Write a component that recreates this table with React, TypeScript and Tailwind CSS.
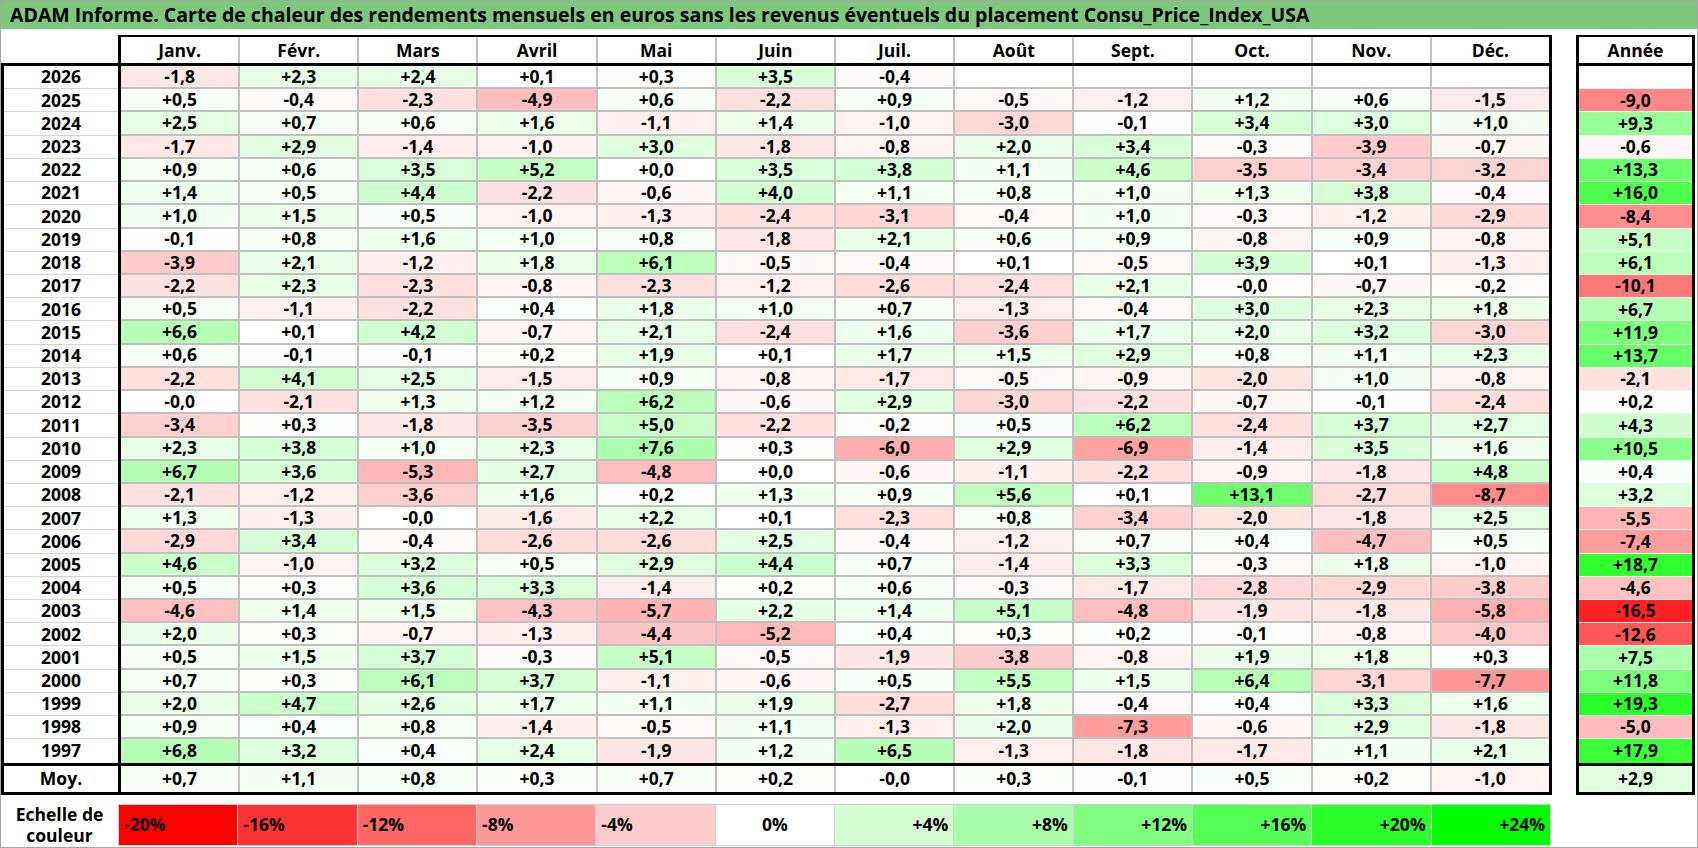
import React from 'react';

const months = ['Janv.', 'Févr.', 'Mars', 'Avril', 'Mai', 'Juin', 'Juil.', 'Août', 'Sept.', 'Oct.', 'Nov.', 'Déc.'];

const raw: string[] = [
  '2026 -1,8 +2,3 +2,4 +0,1 +0,3 +3,5 -0,4 _ _ _ _ _ _',
  '2025 +0,5 -0,4 -2,3 -4,9 +0,6 -2,2 +0,9 -0,5 -1,2 +1,2 +0,6 -1,5 -9,0',
  '2024 +2,5 +0,7 +0,6 +1,6 -1,1 +1,4 -1,0 -3,0 -0,1 +3,4 +3,0 +1,0 +9,3',
  '2023 -1,7 +2,9 -1,4 -1,0 +3,0 -1,8 -0,8 +2,0 +3,4 -0,3 -3,9 -0,7 -0,6',
  '2022 +0,9 +0,6 +3,5 +5,2 +0,0 +3,5 +3,8 +1,1 +4,6 -3,5 -3,4 -3,2 +13,3',
  '2021 +1,4 +0,5 +4,4 -2,2 -0,6 +4,0 +1,1 +0,8 +1,0 +1,3 +3,8 -0,4 +16,0',
  '2020 +1,0 +1,5 +0,5 -1,0 -1,3 -2,4 -3,1 -0,4 +1,0 -0,3 -1,2 -2,9 -8,4',
  '2019 -0,1 +0,8 +1,6 +1,0 +0,8 -1,8 +2,1 +0,6 +0,9 -0,8 +0,9 -0,8 +5,1',
  '2018 -3,9 +2,1 -1,2 +1,8 +6,1 -0,5 -0,4 +0,1 -0,5 +3,9 +0,1 -1,3 +6,1',
  '2017 -2,2 +2,3 -2,3 -0,8 -2,3 -1,2 -2,6 -2,4 +2,1 -0,0 -0,7 -0,2 -10,1',
  '2016 +0,5 -1,1 -2,2 +0,4 +1,8 +1,0 +0,7 -1,3 -0,4 +3,0 +2,3 +1,8 +6,7',
  '2015 +6,6 +0,1 +4,2 -0,7 +2,1 -2,4 +1,6 -3,6 +1,7 +2,0 +3,2 -3,0 +11,9',
  '2014 +0,6 -0,1 -0,1 +0,2 +1,9 +0,1 +1,7 +1,5 +2,9 +0,8 +1,1 +2,3 +13,7',
  '2013 -2,2 +4,1 +2,5 -1,5 +0,9 -0,8 -1,7 -0,5 -0,9 -2,0 +1,0 -0,8 -2,1',
  '2012 -0,0 -2,1 +1,3 +1,2 +6,2 -0,6 +2,9 -3,0 -2,2 -0,7 -0,1 -2,4 +0,2',
  '2011 -3,4 +0,3 -1,8 -3,5 +5,0 -2,2 -0,2 +0,5 +6,2 -2,4 +3,7 +2,7 +4,3',
  '2010 +2,3 +3,8 +1,0 +2,3 +7,6 +0,3 -6,0 +2,9 -6,9 -1,4 +3,5 +1,6 +10,5',
  '2009 +6,7 +3,6 -5,3 +2,7 -4,8 +0,0 -0,6 -1,1 -2,2 -0,9 -1,8 +4,8 +0,4',
  '2008 -2,1 -1,2 -3,6 +1,6 +0,2 +1,3 +0,9 +5,6 +0,1 +13,1 -2,7 -8,7 +3,2',
  '2007 +1,3 -1,3 -0,0 -1,6 +2,2 +0,1 -2,3 +0,8 -3,4 -2,0 -1,8 +2,5 -5,5',
  '2006 -2,9 +3,4 -0,4 -2,6 -2,6 +2,5 -0,4 -1,2 +0,7 +0,4 -4,7 +0,5 -7,4',
  '2005 +4,6 -1,0 +3,2 +0,5 +2,9 +4,4 +0,7 -1,4 +3,3 -0,3 +1,8 -1,0 +18,7',
  '2004 +0,5 +0,3 +3,6 +3,3 -1,4 +0,2 +0,6 -0,3 -1,7 -2,8 -2,9 -3,8 -4,6',
  '2003 -4,6 +1,4 +1,5 -4,3 -5,7 +2,2 +1,4 +5,1 -4,8 -1,9 -1,8 -5,8 -16,5',
  '2002 +2,0 +0,3 -0,7 -1,3 -4,4 -5,2 +0,4 +0,3 +0,2 -0,1 -0,8 -4,0 -12,6',
  '2001 +0,5 +1,5 +3,7 -0,3 +5,1 -0,5 -1,9 -3,8 -0,8 +1,9 +1,8 +0,3 +7,5',
  '2000 +0,7 +0,3 +6,1 +3,7 -1,1 -0,6 +0,5 +5,5 +1,5 +6,4 -3,1 -7,7 +11,8',
  '1999 +2,0 +4,7 +2,6 +1,7 +1,1 +1,9 -2,7 +1,8 -0,4 +0,4 +3,3 +1,6 +19,3',
  '1998 +0,9 +0,4 +0,8 -1,4 -0,5 +1,1 -1,3 +2,0 -7,3 -0,6 +2,9 -1,8 -5,0',
  '1997 +6,8 +3,2 +0,4 +2,4 -1,9 +1,2 +6,5 -1,3 -1,8 -1,7 +1,1 +2,1 +17,9',
];
const moy = '+0,7 +1,1 +0,8 +0,3 +0,7 +0,2 -0,0 +0,3 -0,1 +0,5 +0,2 -1,0 +2,9'.split(' ');

const rows = raw.map((r) => {
  const p = r.split(' ');
  return { year: p[0], vals: p.slice(1, 13).map((v) => (v === '_' ? '' : v)), year_total: p[13] === '_' ? '' : p[13] };
});

function bg(s: string): string {
  if (!s) return '#ffffff';
  const v = parseFloat(s.replace(',', '.'));
  if (v < 0) {
    const t = Math.min(-v / 19, 1);
    const c = Math.round(255 * (1 - t));
    return `rgb(255,${c},${c})`;
  }
  const t = Math.min(v / 23, 1);
  const c = Math.round(255 * (1 - t));
  return `rgb(${c},255,${c})`;
}

const scale = [
  { l: '-20%', c: '#ff0000', a: 'justify-start' },
  { l: '-16%', c: '#ff3333', a: 'justify-start' },
  { l: '-12%', c: '#ff6666', a: 'justify-start' },
  { l: '-8%', c: '#ff9999', a: 'justify-start' },
  { l: '-4%', c: '#ffcccc', a: 'justify-start' },
  { l: '0%', c: '#ffffff', a: 'justify-center' },
  { l: '+4%', c: '#d3ffd3', a: 'justify-end' },
  { l: '+8%', c: '#aaffaa', a: 'justify-end' },
  { l: '+12%', c: '#80ff80', a: 'justify-end' },
  { l: '+16%', c: '#55ff55', a: 'justify-end' },
  { l: '+20%', c: '#2bff2b', a: 'justify-end' },
  { l: '+24%', c: '#00ff00', a: 'justify-end' },
];

const ROW = 'h-[23.23px]';

export default function App() {
  return (
    <div className="w-[1698px] h-[848px] border border-[#a6a6a6] bg-white font-['Open_Sans',sans-serif] font-bold text-[17.5px] text-black overflow-hidden">
      <div className="h-[28px] bg-[#7ec87e] pl-[9px] flex items-center text-[19.5px] leading-none">
        ADAM Informe. Carte de chaleur des rendements mensuels en euros sans les revenus éventuels du placement Consu_Price_Index_USA
      </div>
      <div className="flex pt-[6px]">
        {/* main table */}
        <div className="w-[1551px] flex flex-col">
          <div className="flex h-[28px]">
            <div className="w-[117px]" />
            <div className="flex-1 border-t-[2px] border-x-[3px] border-black grid grid-cols-12 gap-x-[2px] bg-[#c0c0c0]">
              {months.map((m) => (
                <div key={m} className="bg-white flex items-center justify-center leading-none pt-[1px]">
                  {m}
                </div>
              ))}
            </div>
          </div>
          <div className="h-[3px] bg-black" />
          <div className="border-x-[3px] border-black">
            {rows.map((r, i) => (
              <div key={r.year} className={`flex ${ROW}`}>
                <div className={`w-[114px] flex items-center justify-center leading-none ${i < rows.length - 1 ? 'border-b border-[#d4d4d4]' : ''}`}>
                  {r.year}
                </div>
                <div className="w-[3px] bg-black" />
                <div className={`flex-1 grid grid-cols-12 gap-x-[2px] bg-[#c0c0c0] ${i < rows.length - 1 ? 'border-b-2 border-[#c0c0c0]' : ''}`}>
                  {r.vals.map((v, j) => (
                    <div key={j} className="flex items-center justify-center leading-none" style={{ backgroundColor: bg(v) }}>
                      {v}
                    </div>
                  ))}
                </div>
              </div>
            ))}
          </div>
          <div className="h-[3px] bg-black" />
          <div className="flex h-[26px] border-x-[3px] border-black">
            <div className="w-[114px] flex items-center justify-center leading-none">Moy.</div>
            <div className="w-[3px] bg-black" />
            <div className="flex-1 grid grid-cols-12 gap-x-[2px] bg-[#c0c0c0]">
              {moy.slice(0, 12).map((v, j) => (
                <div key={j} className="flex items-center justify-center leading-none" style={{ backgroundColor: bg(v) }}>
                  {v}
                </div>
              ))}
            </div>
          </div>
          <div className="h-[3px] bg-black" />
        </div>
        <div className="w-[24px]" />
        {/* annual column */}
        <div className="w-[119px] flex flex-col">
          <div className="h-[28px] border-t-[2px] border-x-[3px] border-black flex items-center justify-center leading-none pt-[1px]">
            Année
          </div>
          <div className="h-[3px] bg-black" />
          <div className="border-x-[3px] border-black">
            {rows.map((r, i) => (
              <div
                key={r.year}
                className={`${ROW} flex items-center justify-center leading-none ${i < rows.length - 1 ? 'border-b border-[#f2f2f2]' : ''}`}
                style={{ backgroundColor: bg(r.year_total) }}
              >
                {r.year_total}
              </div>
            ))}
          </div>
          <div className="h-[3px] bg-black" />
          <div className="h-[26px] border-x-[3px] border-black flex items-center justify-center leading-none" style={{ backgroundColor: bg(moy[12]) }}>
            {moy[12]}
          </div>
          <div className="h-[3px] bg-black" />
        </div>
      </div>
      {/* scale */}
      <div className="flex mt-[9px] h-[42px]">
        <div className="w-[117px] flex flex-col items-center justify-center leading-[21px] text-[17.5px]">
          <span>Echelle de</span>
          <span>couleur</span>
        </div>
        <div className="w-[1433px] grid grid-cols-12 gap-x-[1px] bg-[#cfcfcf] border border-[#cfcfcf]">
          {scale.map((s) => (
            <div key={s.l} className={`flex items-center px-[5px] text-[17.5px] ${s.a}`} style={{ backgroundColor: s.c }}>
              {s.l}
            </div>
          ))}
        </div>
      </div>
    </div>
  );
}
